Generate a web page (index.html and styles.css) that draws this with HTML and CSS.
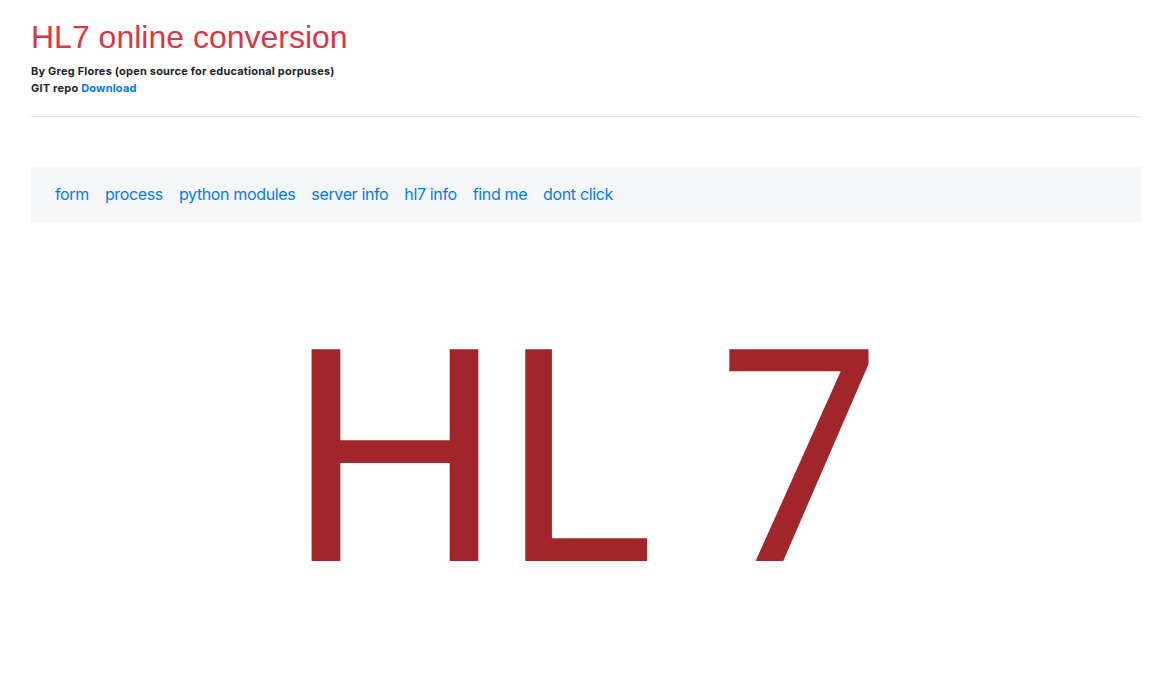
FILE: index.html
```html
<!DOCTYPE html>
<html lang="en">
<head>
<meta charset="utf-8">
<title>HL7 online conversion</title>
<link rel="stylesheet" href="styles.css">
</head>
<body>
<div class="container">
  <header class="header">
    <h2 class="title">HL7 online conversion</h2>
    <div class="byline">By Greg Flores (open source for educational porpuses)</div>
    <div class="byline">GIT repo <a class="dl" href="#">Download</a></div>
  </header>
  <hr class="rule">
  <nav class="navbar">
    <a class="nav-link" href="#">form</a>
    <a class="nav-link" href="#">process</a>
    <a class="nav-link" href="#">python modules</a>
    <a class="nav-link" href="#">server info</a>
    <a class="nav-link" href="#">hl7 info</a>
    <a class="nav-link" href="#">find me</a>
    <a class="nav-link" href="#">dont click</a>
  </nav>
  <svg class="logo" viewBox="0 0 1110 440" width="1110" height="440" xmlns="http://www.w3.org/2000/svg">
    <g class="logo-text">
      <text transform="translate(255.4 339) scale(1.024 1)">H</text>
      <text transform="translate(471 339) scale(0.948 1)">L</text>
      <text transform="translate(687.3 339) scale(0.972 1)">7</text>
    </g>
  </svg>
</div>
</body>
</html>
```
FILE: styles.css
```css
html, body {
  margin: 0;
  padding: 0;
  background: #ffffff;
}
body {
  font-family: Inter, "Liberation Sans", Arial, sans-serif;
  color: #212529;
}
.container {
  width: 1110px;
  margin-left: 31px;
}
.header {
  padding-top: 18px;
}
.title {
  margin: 0 0 7px 0;
  font-family: "Liberation Sans", Arial, sans-serif;
  font-size: 32px;
  line-height: 1.2;
  font-weight: 400;
  color: #dc3545;
}
.byline {
  font-size: 11px;
  line-height: 17px;
  font-weight: 700;
  letter-spacing: 0.2px;
  color: #212529;
}
.dl {
  color: #007bff;
  text-decoration: none;
}
.rule {
  margin: 19px 0 0 0;
  border: 0;
  border-top: 1px solid #e2e2e2;
  height: 0;
}
.navbar {
  margin-top: 50px;
  background: #f6f7f9;
  padding: 8px 16px;
  display: flex;
  align-items: center;
}
.nav-link {
  color: #007bff;
  text-decoration: none;
  font-size: 16px;
  line-height: 23px;
  letter-spacing: -0.36px;
  padding: 8px 8px;
}
.logo {
  display: block;
}
.logo-text {
  font-family: Roboto, "Liberation Sans", sans-serif;
  font-size: 298px;
  font-weight: 400;
  fill: #a2252b;
}
```
